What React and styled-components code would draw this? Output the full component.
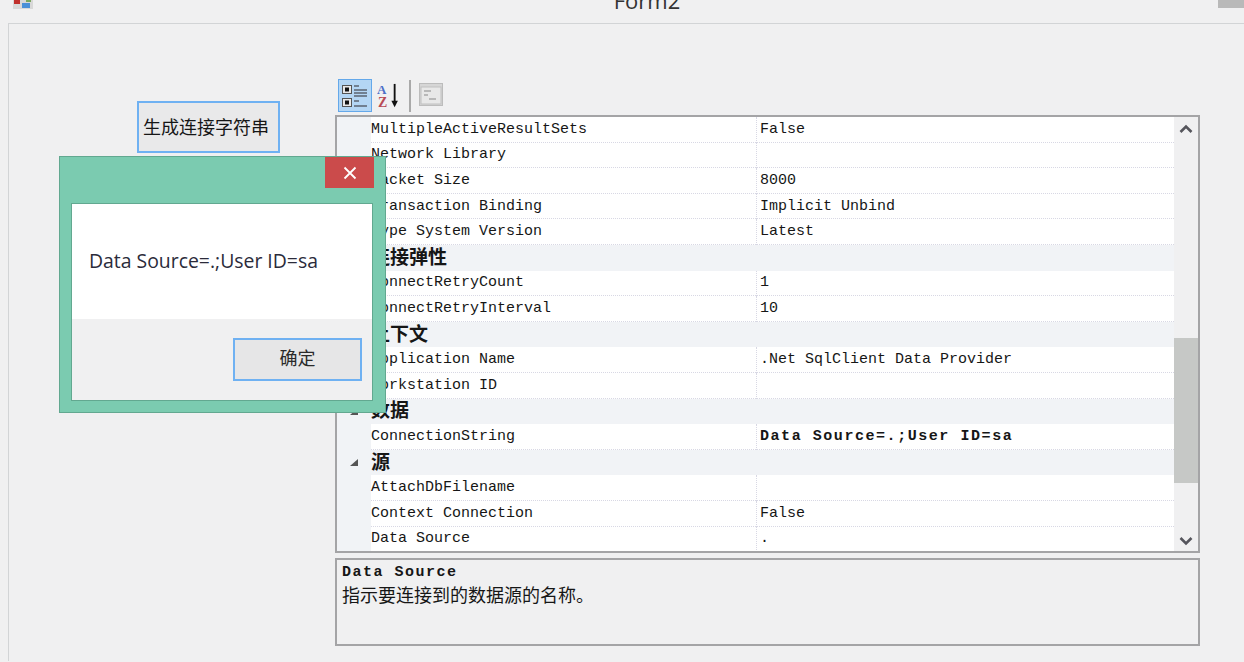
import React from 'react';
import styled, { createGlobalStyle } from 'styled-components';

const GlobalStyle = createGlobalStyle`
  html, body {
    margin: 0;
    padding: 0;
    background: #f0f0f1;
  }
`;

const cjk = '"Noto Sans CJK SC", sans-serif';
const mono = '"Liberation Mono", "Noto Sans CJK SC", monospace';

const Page = styled.div`
  position: relative;
  width: 1244px;
  height: 662px;
  overflow: hidden;
  background: #f0f0f1;
  color: #161616;
`;

const TitleBar = styled.div`
  position: relative;
  height: 23px;
  display: flex;
  justify-content: center;
  overflow: hidden;
`;

const TitleText = styled.span`
  margin: -13px 0 0 50px;
  font: 22px/26px "Open Sans", sans-serif;
  color: #333;
`;

const AppIcon = styled.svg`
  position: absolute;
  left: 13px;
  top: 0;
`;

const WindowButton = styled.div`
  position: absolute;
  right: 0;
  top: 0;
  width: 26px;
  height: 8px;
  background: #b9b9b9;
`;

const Client = styled.div`
  height: 638px;
  margin-left: 8px;
  padding: 55px 0 0 128px;
  box-sizing: border-box;
  display: flex;
  align-items: flex-start;
  border-top: 1px solid #d2d4d6;
  border-left: 1px solid #d2d4d6;
`;

const Action = styled.button`
  width: 143px;
  height: 52px;
  margin-top: 22px;
  padding: 0 5px 2px 0;
  box-sizing: border-box;
  border: 2px solid #6fb1f2;
  background: #e9e9ea;
  color: #161616;
  font: 18px/1 ${cjk};
`;

const PropertyPanel = styled.div`
  width: 865px;
  margin-left: 55px;
  display: flex;
  flex-direction: column;
`;

const Toolbar = styled.div`
  height: 36px;
  padding-left: 3px;
  display: flex;
  align-items: flex-start;
`;

const ToolButton = styled.div`
  width: 34px;
  height: 33px;
  box-sizing: border-box;
  display: flex;
  align-items: center;
  justify-content: center;
  border: ${p => (p.$active ? '1px solid #64a8ea' : '1px solid transparent')};
  background: ${p => (p.$active ? '#b4d6f4' : 'transparent')};
`;

const SortButton = styled(ToolButton)`
  width: 32px;
  padding-left: 4px;
`;

const ToolSeparator = styled.div`
  width: 2px;
  height: 32px;
  margin: 1px 8px 0 5px;
  background: #a9a9a9;
`;

const PageIcon = styled.svg`
  margin-top: 4px;
`;

const Grid = styled.div`
  height: 438px;
  box-sizing: border-box;
  display: flex;
  border: 2px solid #a4a4a6;
`;

const Rows = styled.div`
  flex: 1;
  display: flex;
  flex-direction: column;
  overflow: hidden;
  background: #f1f3f6;
`;

const Row = styled.div`
  height: 25.6px;
  flex: none;
  box-sizing: border-box;
  display: grid;
  grid-template-columns: 34px 385px 1fr;
  align-items: center;
  background: ${p => (p.$category ? '#f1f3f6' : 'transparent')};
`;

const Gutter = styled.div`
  display: flex;
  justify-content: center;
  padding-left: 1px;
`;

const NameCell = styled.div`
  height: 100%;
  padding-left: 0;
  display: flex;
  align-items: center;
  background: #fff;
  border-bottom: 1px dotted #d8d8e4;
  box-sizing: border-box;
  font: 15px/1 ${mono};
  white-space: pre;
`;

const ValueCell = styled(NameCell)`
  padding-left: 3px;
  border-left: 1px dotted #d8d8e4;
  font-weight: ${p => (p.$bold ? 700 : 400)};
  letter-spacing: ${p => (p.$bold ? '1.55px' : '0')};
`;

const CategoryName = styled.div`
  grid-column: 2 / 4;
  margin-top: -5px;
  font: 700 19px/1 ${cjk};
`;

const Scrollbar = styled.div`
  width: 24px;
  flex: none;
  position: relative;
  display: flex;
  flex-direction: column;
  align-items: center;
  justify-content: space-between;
  padding: 7px 0 5px;
  box-sizing: border-box;
  background: #f0f0f1;
`;

const ScrollThumb = styled.div`
  position: absolute;
  left: 0;
  right: 0;
  top: 221px;
  height: 145px;
  background: #c6c8c6;
`;

const Description = styled.div`
  height: 88px;
  margin-top: 5px;
  padding: 4px 0 0 5px;
  box-sizing: border-box;
  border: 2px solid #a4a4a6;
`;

const DescriptionTitle = styled.div`
  font: 700 15px/17px ${mono};
  letter-spacing: 1.5px;
`;

const DescriptionText = styled.div`
  font: 18px/26px ${cjk};
`;

const Dialog = styled.div`
  position: absolute;
  left: 59px;
  top: 156px;
  width: 327px;
  height: 257px;
  box-sizing: border-box;
  padding: 46px 12px 11px 11px;
  display: flex;
  background: #7bcbb0;
  border: 1px solid #62a890;
`;

const CloseButton = styled.div`
  position: absolute;
  right: 11px;
  top: 0;
  width: 49px;
  height: 31px;
  display: flex;
  align-items: center;
  justify-content: center;
  background: #cb4b4b;
`;

const DialogBody = styled.div`
  flex: 1;
  display: flex;
  flex-direction: column;
  border: 1px solid #62a890;
  background: #f0f0f1;
`;

const Message = styled.div`
  height: 115px;
  padding: 46px 0 0 17px;
  box-sizing: border-box;
  background: #fff;
  font: 19.4px/22px "Open Sans", sans-serif;
  white-space: nowrap;
  color: #2b2b3a;
`;

const DialogActions = styled.div`
  flex: 1;
  display: flex;
  justify-content: flex-end;
  padding: 19px 10px 0 0;
`;

const OkButton = styled.button`
  width: 129px;
  height: 43px;
  padding: 0 0 6px;
  box-sizing: border-box;
  border: 2px solid #6fb1f2;
  background: #e6e6e7;
  color: #2a2a2a;
  font: 18px/1 ${cjk};
`;

const rows = [
  { name: 'MultipleActiveResultSets', value: 'False' },
  { name: 'Network Library', value: '' },
  { name: 'Packet Size', value: '8000' },
  { name: 'Transaction Binding', value: 'Implicit Unbind' },
  { name: 'Type System Version', value: 'Latest' },
  { category: '连接弹性' },
  { name: 'ConnectRetryCount', value: '1' },
  { name: 'ConnectRetryInterval', value: '10' },
  { category: '上下文' },
  { name: 'Application Name', value: '.Net SqlClient Data Provider' },
  { name: 'Workstation ID', value: '' },
  { category: '数据' },
  { name: 'ConnectionString', value: 'Data Source=.;User ID=sa', bold: true },
  { category: '源' },
  { name: 'AttachDbFilename', value: '' },
  { name: 'Context Connection', value: 'False' },
  { name: 'Data Source', value: '.' },
];

const Expanded = () => (
  <svg width="11" height="9" viewBox="0 0 11 9">
    <path d="M1 8 L9 1 L9 8 Z" fill="#555" />
  </svg>
);

const Chevron = ({ down }) => (
  <svg width="14" height="10" viewBox="0 0 14 10">
    <path
      d={down ? 'M1.5 2 L7 7.5 L12.5 2' : 'M1.5 8 L7 2.5 L12.5 8'}
      fill="none"
      stroke="#55555c"
      strokeWidth="2.6"
    />
  </svg>
);

const CategorizedIcon = () => (
  <svg width="28" height="26" viewBox="0 0 28 26">
    <rect x="1.5" y="2.5" width="9" height="8" fill="#e8e8e8" stroke="#555" />
    <rect x="4" y="4.5" width="4" height="4" fill="#111" />
    <rect x="1.5" y="15.5" width="9" height="8" fill="#e8e8e8" stroke="#555" />
    <rect x="4" y="17.5" width="4" height="4" fill="#111" />
    <path d="M13 3h5M13 7h13M13 10h13M13 13h13M13 18h5M13 23h13" stroke="#5b6470" strokeWidth="1.4" />
  </svg>
);

const SortIcon = () => (
  <svg width="28" height="28" viewBox="0 0 28 28">
    <text x="0" y="12" fontFamily="Liberation Serif" fontWeight="700" fontSize="14" fill="#4c6fc8">A</text>
    <text x="1" y="26" fontFamily="Liberation Serif" fontWeight="700" fontSize="15" fill="#b84a55">Z</text>
    <path d="M19 1V22" stroke="#111" strokeWidth="2" />
    <path d="M15.5 19 L19 26 L22.5 19 Z" fill="#111" />
  </svg>
);

const PropertyPagesIcon = () => (
  <PageIcon width="24" height="23" viewBox="0 0 24 23">
    <rect x="0.5" y="0.5" width="23" height="22" fill="#d6d6d6" stroke="#bcbcbc" />
    <rect x="2" y="4" width="20" height="17" fill="#e8e8e8" stroke="#c0c0c0" />
    <path d="M5 8h7M5 12h4M10 16h7" stroke="#a8a8a8" strokeWidth="1.4" />
  </PageIcon>
);

const App = () => (
  <Page>
    <GlobalStyle />
    <TitleBar>
      <AppIcon width="20" height="9" viewBox="0 0 20 9">
        <rect width="20" height="9" fill="#d8d8d8" />
        <rect x="1" width="6" height="4" fill="#c0302c" />
        <rect x="9" y="3" width="8" height="5" fill="#4a90d8" />
        <rect x="13" width="5" height="2" fill="#7aa860" />
      </AppIcon>
      <TitleText>Form2</TitleText>
      <WindowButton />
    </TitleBar>
    <Client>
      <Action>生成连接字符串</Action>
      <PropertyPanel>
        <Toolbar>
          <ToolButton $active><CategorizedIcon /></ToolButton>
          <SortButton><SortIcon /></SortButton>
          <ToolSeparator />
          <PropertyPagesIcon />
        </Toolbar>
        <Grid>
          <Rows>
            {rows.map((row, i) =>
              row.category ? (
                <Row key={i} $category>
                  <Gutter><Expanded /></Gutter>
                  <CategoryName>{row.category}</CategoryName>
                </Row>
              ) : (
                <Row key={i}>
                  <Gutter />
                  <NameCell>{row.name}</NameCell>
                  <ValueCell $bold={row.bold}>{row.value}</ValueCell>
                </Row>
              )
            )}
          </Rows>
          <Scrollbar>
            <Chevron />
            <ScrollThumb />
            <Chevron down />
          </Scrollbar>
        </Grid>
        <Description>
          <DescriptionTitle>Data Source</DescriptionTitle>
          <DescriptionText>指示要连接到的数据源的名称。</DescriptionText>
        </Description>
      </PropertyPanel>
    </Client>
    <Dialog>
      <CloseButton>
        <svg width="14" height="14" viewBox="0 0 14 14">
          <path d="M1.5 1.5 L12.5 12.5 M12.5 1.5 L1.5 12.5" stroke="#fff" strokeWidth="1.8" />
        </svg>
      </CloseButton>
      <DialogBody>
        <Message>Data Source=.;User ID=sa</Message>
        <DialogActions>
          <OkButton>确定</OkButton>
        </DialogActions>
      </DialogBody>
    </Dialog>
  </Page>
);

export default App;
